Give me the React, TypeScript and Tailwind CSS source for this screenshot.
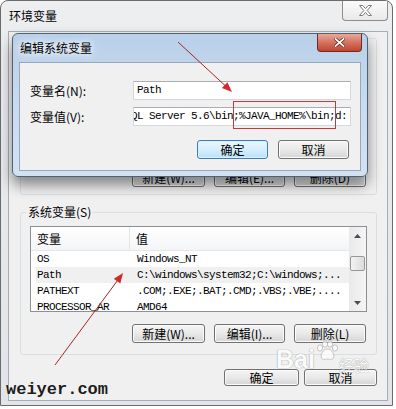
import clsx from "clsx";

const CJK = "font-['Noto_Sans_CJK_SC',sans-serif]";
const MONO = "font-['Liberation_Mono',monospace]";

interface BtnProps {
  label: string;
  className?: string;
  focused?: boolean;
}

const WinButton = ({ label, className, focused }: BtnProps) => (
  <div
    className={clsx(
      "flex items-center justify-center rounded-[3px] border text-[12px] leading-none text-black",
      CJK,
      focused
        ? "border-[#3c7fb1] bg-linear-to-b from-[#eaf6fd] via-[#d5effc] to-[#b9e1f7] shadow-[inset_0_0_0_1px_#d8f0fd]"
        : "border-[#707070] bg-linear-to-b from-[#f5f5f5] via-[#e9e9e9] to-[#d5d5d5] shadow-[inset_0_0_0_1px_#fbfbfb]",
      className
    )}
  >
    {label}
  </div>
);

const rows = [
  { name: "OS", value: "Windows_NT" },
  { name: "Path", value: "C:\\windows\\system32;C:\\windows;...", selected: true },
  { name: "PATHEXT", value: ".COM;.EXE;.BAT;.CMD;.VBS;.VBE;...." },
  { name: "PROCESSOR_AR", value: "AMD64" },
];

// hollow "X" used on the inactive close button
const HollowX = () => (
  <svg width="13" height="11" viewBox="0 0 13 11">
    <polygon
      points="0.5,0.5 3.8,0.5 6.5,3.6 9.2,0.5 12.5,0.5 8.2,5.5 12.5,10.5 9.2,10.5 6.5,7.4 3.8,10.5 0.5,10.5 4.8,5.5"
      fill="#ffffff"
      stroke="#7c7c7c"
      strokeWidth="1"
    />
  </svg>
);

const App = () => {
  return (
    <div className="relative h-[409px] w-[396px] overflow-hidden bg-white">
      {/* 环境变量 window */}
      <div className="flex h-[406px] w-[393px] flex-col rounded-t-[8px] border border-[#6b6b6b] bg-linear-to-b from-[#eceef0] to-[#e1e4e8]">
        <div className="flex h-[30px] shrink-0 items-start justify-between">
          <span className={clsx("pl-[8px] pt-[7px] text-[12px] leading-[16px] text-black", CJK)}>
            环境变量
          </span>
          <div className="mr-[4px] flex h-[20px] w-[46px] items-center justify-center rounded-b-[4px] border border-t-0 border-[#8d8d8d] bg-linear-to-b from-[#fbfbfb] to-[#e9e9e9]">
            <HollowX />
          </div>
        </div>

        <div className="mb-[4px] ml-[7px] mr-[4px] flex flex-1 flex-col border border-[#a7adb5] bg-[#f0f0f0]">
          {/* 用户变量 group (mostly hidden by the dialog) */}
          <div className="ml-[11px] mr-[10px] mt-[6px] flex h-[157px] flex-col justify-end rounded-[3px] border border-[#d5dfe5] pb-[7px]">
            <div className="flex justify-end gap-[9px] pr-[10px]">
              <WinButton label="新建(W)..." className="h-[19px] w-[73px]" />
              <WinButton label="编辑(E)..." className="h-[19px] w-[71px]" />
              <WinButton label="删除(D)" className="h-[19px] w-[72px]" />
            </div>
          </div>

          {/* 系统变量 group */}
          <fieldset className="ml-[11px] mr-[10px] mt-[10px] rounded-[3px] border border-[#d5dfe5] px-[9px] pb-[11px]">
            <legend className={clsx("-ml-[4px] px-[2px] text-[12px] leading-[14px] text-black", CJK)}>
              系统变量(S)
            </legend>
            <div className="mt-[7px] flex h-[86px] border border-[#8c9096] bg-white">
              <div className="flex-1 overflow-hidden">
                <div className={clsx("flex h-[24px] border-b border-[#e5e7ea] bg-linear-to-b from-white to-[#f4f5f7] text-[12px] text-black", CJK)}>
                  <div className="flex w-[99px] items-center border-r border-[#e3e5e8] pl-[6px]">变量</div>
                  <div className="flex items-center pl-[6px]">值</div>
                </div>
                {rows.map((r) => (
                  <div
                    key={r.name}
                    className={clsx(
                      "ml-[5px] flex h-[16px] items-center text-[11px] tracking-[-0.6px] text-black",
                      MONO,
                      r.selected && "bg-[#f0f0f0]"
                    )}
                  >
                    <div className="w-[100px] pl-[1px]">{r.name}</div>
                    <div className="whitespace-nowrap pl-[1px]">{r.value}</div>
                  </div>
                ))}
              </div>
              {/* scrollbar */}
              <div className="flex w-[17px] flex-col bg-linear-to-r from-[#e9e9e9] to-[#f5f5f5]">
                <div className="flex h-[17px] items-center justify-center">
                  <svg width="7" height="4" viewBox="0 0 7 4">
                    <polygon points="3.5,0 7,4 0,4" fill="#4d4d4d" />
                  </svg>
                </div>
                <div className="mx-[1px] mt-[12px] h-[15px] rounded-[2px] border border-[#979797] bg-linear-to-r from-[#f3f3f3] to-[#dcdcdc]" />
                <div className="flex-1" />
                <div className="flex h-[17px] items-center justify-center">
                  <svg width="7" height="4" viewBox="0 0 7 4">
                    <polygon points="0,0 7,0 3.5,4" fill="#4d4d4d" />
                  </svg>
                </div>
              </div>
            </div>
            <div className="mt-[12px] flex justify-end gap-[9px] pr-[1px]">
              <WinButton label="新建(W)..." className="h-[19px] w-[73px]" />
              <WinButton label="编辑(I)..." className="h-[19px] w-[71px]" />
              <WinButton label="删除(L)" className="h-[19px] w-[72px]" />
            </div>
          </fieldset>

          <div className="mt-[14px] flex justify-end gap-[5px] pr-[10px]">
            <WinButton label="确定" className="h-[17px] w-[75px]" />
            <WinButton label="取消" className="h-[17px] w-[73px]" />
          </div>
        </div>
      </div>

      {/* 编辑系统变量 dialog, on top */}
      <div className="absolute left-[12px] top-[33px] flex h-[144px] w-[356px] flex-col rounded-[6px] border border-[#4e6276] bg-linear-to-b from-[#b9d0e9] via-[#c9dbee] to-[#d3e2f2] shadow-[0_8px_14px_rgba(0,0,0,0.45)]">
        <div className="flex h-[28px] shrink-0 items-start justify-between">
          <span className={clsx("pl-[7px] pt-[6px] text-[12px] leading-[16px] text-black [text-shadow:0_0_6px_#ffffff,0_0_10px_#ffffff]", CJK)}>
            编辑系统变量
          </span>
          <div className="mr-[5px] flex h-[18px] w-[45px] items-center justify-center rounded-b-[4px] border border-t-0 border-[#6e2b22] bg-linear-to-b from-[#e9a99b] via-[#d47261] to-[#c2422f]">
            <svg width="11" height="9" viewBox="0 0 11 9">
              <path d="M1.5 1 L9.5 8 M9.5 1 L1.5 8" stroke="#5a1d15" strokeWidth="3.2" strokeLinecap="square" />
              <path d="M1.5 1 L9.5 8 M9.5 1 L1.5 8" stroke="#ffffff" strokeWidth="1.8" strokeLinecap="square" />
            </svg>
          </div>
        </div>
        <div className="mx-[6px] mb-[5px] flex flex-1 flex-col border border-[#93a9c1] bg-[#f0f0f0]">
          <div className="mt-[18px] flex h-[19px] items-center">
            <span className={clsx("w-[113px] pl-[10px] text-[12px] text-black", CJK)}>变量名(N):</span>
            <div className={clsx("mr-[9px] flex h-full flex-1 items-center overflow-hidden border border-[#d3d7de] border-t-[#abadb3] bg-white pl-[3px] text-[11px] tracking-[-0.6px] text-black", MONO)}>
              Path
            </div>
          </div>
          <div className="mt-[7px] flex h-[19px] items-center">
            <span className={clsx("w-[113px] pl-[10px] text-[12px] text-black", CJK)}>变量值(V):</span>
            <div className={clsx("mr-[9px] flex h-full flex-1 items-center overflow-hidden whitespace-nowrap border border-[#d3d7de] border-t-[#abadb3] bg-white text-[11px] tracking-[-0.6px] text-black", MONO)}>
              <span className="-ml-[3px]">QL Server 5.6\bin;%JAVA_HOME%\bin;d:</span>
            </div>
          </div>
          <div className="mt-[14px] flex justify-end gap-[10px] pr-[11px]">
            <WinButton label="确定" focused className="h-[19px] w-[71px]" />
            <WinButton label="取消" className="h-[19px] w-[71px]" />
          </div>
        </div>
      </div>

      {/* red highlight box */}
      <div className="absolute left-[233px] top-[101px] h-[28px] w-[103px] border border-[#c43a3a]" />

      {/* Baidu watermark */}
      <div className="pointer-events-none absolute left-[276px] top-[340px] flex items-end opacity-70">
        <span className="font-['Liberation_Sans',sans-serif] text-[25px] font-bold leading-none text-white [text-shadow:0_0_1px_#8a8a8a,0_0_1px_#8a8a8a]">
          Bai
        </span>
        <svg width="24" height="22" viewBox="0 0 24 22" className="mb-[10px]">
          <g fill="#ffffff" stroke="#a0a0a0" strokeWidth="0.8">
            <ellipse cx="5" cy="8" rx="2.6" ry="3.2" />
            <ellipse cx="10" cy="4" rx="2.6" ry="3.2" />
            <ellipse cx="15" cy="4" rx="2.6" ry="3.2" />
            <ellipse cx="20" cy="8" rx="2.6" ry="3.2" />
            <path d="M12.5 9 C17 9 20 15 18.5 18 C17 20.5 14 19 12.5 19 C11 19 8 20.5 6.5 18 C5 15 8 9 12.5 9 Z" />
          </g>
        </svg>
        <span className={clsx("text-[15px] leading-none text-white [text-shadow:0_0_1px_#8a8a8a,0_0_1px_#8a8a8a]", CJK)}>
          经验
        </span>
      </div>

      {/* weiyer.com watermark */}
      <div className={clsx("absolute left-[6px] top-[381px] text-[17px] font-bold leading-[18px] text-[#1c1c1c] [text-shadow:0_0_1px_#ffffff]", MONO)}>
        weiyer.com
      </div>

      {/* red arrows */}
      <svg className="pointer-events-none absolute inset-0" width="396" height="409">
        <line x1="178" y1="42" x2="225" y2="85.5" stroke="#a32626" strokeWidth="1" />
        <polygon points="232,92 221.9,88.1 227.4,82.3" fill="#d02a2a" />
        <line x1="55" y1="365" x2="117.5" y2="280.5" stroke="#a32626" strokeWidth="1" />
        <polygon points="123,273 120.3,283.4 113.8,278.7" fill="#d02a2a" />
      </svg>
    </div>
  );
};

export default App;
